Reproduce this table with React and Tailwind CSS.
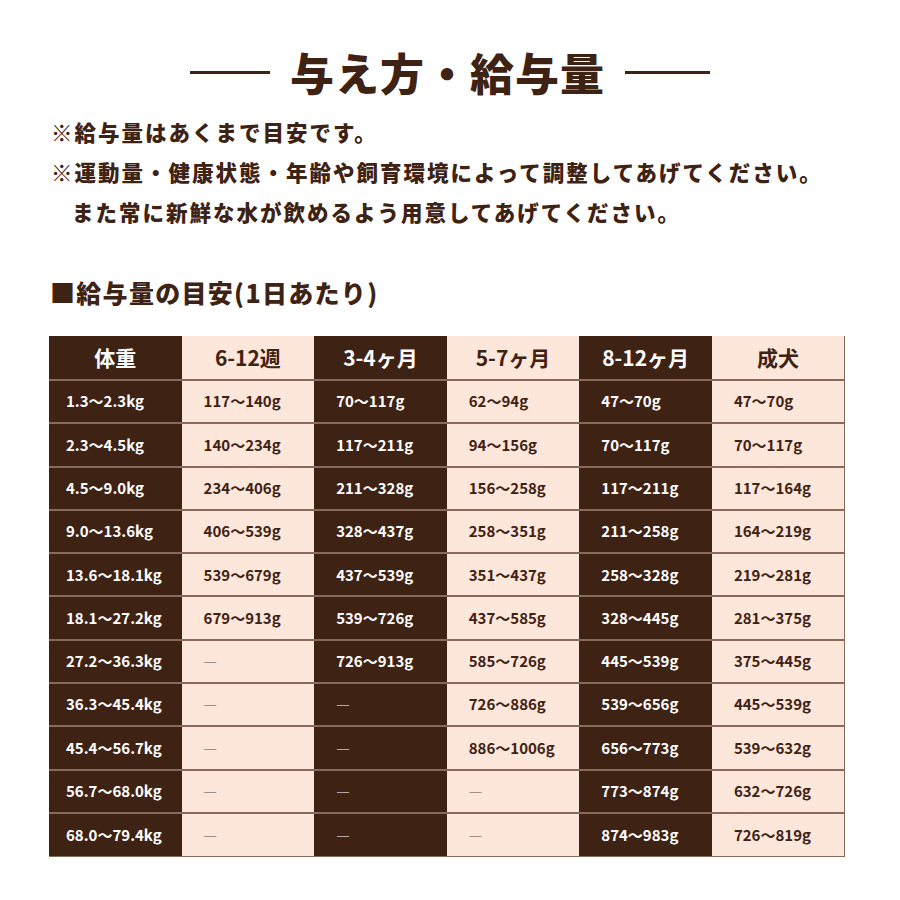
import React from "react";

const font = { fontFamily: '"Noto Sans CJK JP", "Noto Sans", sans-serif' };

const headers = ["体重", "6-12週", "3-4ヶ月", "5-7ヶ月", "8-12ヶ月", "成犬"];

const rows = [
  ["1.3〜2.3kg", "117〜140g", "70〜117g", "62〜94g", "47〜70g", "47〜70g"],
  ["2.3〜4.5kg", "140〜234g", "117〜211g", "94〜156g", "70〜117g", "70〜117g"],
  ["4.5〜9.0kg", "234〜406g", "211〜328g", "156〜258g", "117〜211g", "117〜164g"],
  ["9.0〜13.6kg", "406〜539g", "328〜437g", "258〜351g", "211〜258g", "164〜219g"],
  ["13.6〜18.1kg", "539〜679g", "437〜539g", "351〜437g", "258〜328g", "219〜281g"],
  ["18.1〜27.2kg", "679〜913g", "539〜726g", "437〜585g", "328〜445g", "281〜375g"],
  ["27.2〜36.3kg", "—", "726〜913g", "585〜726g", "445〜539g", "375〜445g"],
  ["36.3〜45.4kg", "—", "—", "726〜886g", "539〜656g", "445〜539g"],
  ["45.4〜56.7kg", "—", "—", "886〜1006g", "656〜773g", "539〜632g"],
  ["56.7〜68.0kg", "—", "—", "—", "773〜874g", "632〜726g"],
  ["68.0〜79.4kg", "—", "—", "—", "874〜983g", "726〜819g"],
];

function Cell({ value, col }) {
  const dark = col % 2 === 0;
  const isDash = value === "—";
  return (
    <td
      className={
        "h-[43.3px] border-t-2 border-[#8a6a5a] text-[15px] font-bold whitespace-nowrap " +
        (dark ? "bg-[#3e2214] text-white" : "bg-[#fde6da] text-[#3e2214]") +
        (col === 0 ? " pl-[17px]" : " pl-[22px]")
      }
    >
      {isDash ? (
        <span
          className={
            "font-normal " + (dark ? "text-[#b8aaa3]" : "text-[#a0908a]")
          }
        >
          —
        </span>
      ) : (
        value
      )}
    </td>
  );
}

export default function App() {
  return (
    <div className="w-[900px] min-h-[900px] bg-white text-[#3e2214]" style={font}>
      <div className="flex items-center justify-center gap-[20px] pt-[44px]">
        <div className="w-[80px] h-[3px] bg-[#3e2214]" />
        <h1 className="text-[44px] leading-[56px] font-black tracking-[1px]">
          与え方・給与量
        </h1>
        <div className="w-[85px] h-[3px] bg-[#3e2214]" />
      </div>

      <div className="pl-[51px] pt-[12px] text-[21.5px] font-extrabold leading-[40px] tracking-[2px]">
        <p>※給与量はあくまで目安です。</p>
        <p>※運動量・健康状態・年齢や飼育環境によって調整してあげてください。</p>
        <p className="pl-[21px]">また常に新鮮な水が飲めるよう用意してあげてください。</p>
      </div>

      <h2 className="pl-[50px] pt-[43px] text-[25px] font-extrabold leading-[34px] tracking-[1.3px]">
        ■給与量の目安(1日あたり)
      </h2>

      <div className="pl-[49px] pt-[27px]">
        <table className="w-[796px] table-fixed border-collapse border-r border-b border-[#8a6a5a]">
          <thead>
            <tr>
              {headers.map((h, i) => (
                <th
                  key={h}
                  className={
                    "h-[44px] text-center text-[21px] font-bold " +
                    (i % 2 === 0
                      ? "bg-[#3e2214] text-white"
                      : "bg-[#fde6da] text-[#3e2214]")
                  }
                >
                  {h}
                </th>
              ))}
            </tr>
          </thead>
          <tbody>
            {rows.map((r) => (
              <tr key={r[0]}>
                {r.map((v, i) => (
                  <Cell key={i} value={v} col={i} />
                ))}
              </tr>
            ))}
          </tbody>
        </table>
      </div>
    </div>
  );
}
